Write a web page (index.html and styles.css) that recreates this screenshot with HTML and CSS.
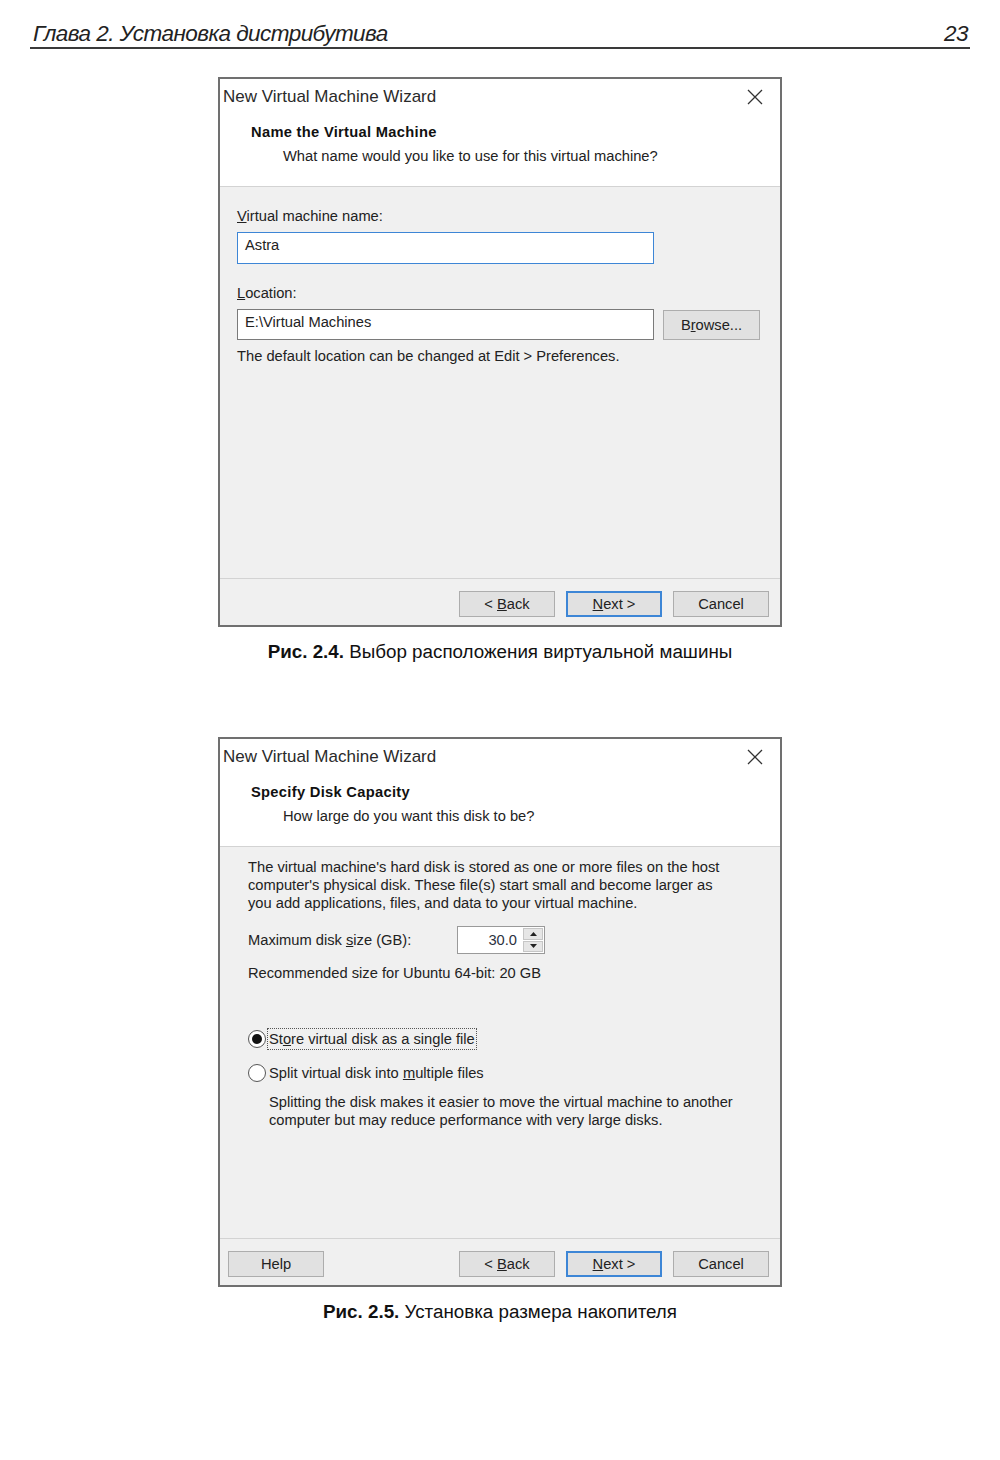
FILE: index.html
```html
<!DOCTYPE html>
<html lang="ru">
<head>
<meta charset="utf-8">
<title>Глава 2. Установка дистрибутива</title>
<link rel="stylesheet" href="styles.css">
</head>
<body>
<div class="page">
  <header class="running-head">
    <span class="chapter">Глава 2. Установка дистрибутива</span>
    <span class="page-no">23</span>
  </header>

  <figure class="figure fig-first">
    <div class="dialog">
      <div class="dlg-head">
        <div class="titlebar">
          <span class="title">New Virtual Machine Wizard</span>
          <svg class="close" width="16" height="16" viewBox="0 0 16 16"><path d="M1 1 L15 15 M15 1 L1 15" stroke="#333" stroke-width="1.3" fill="none"/></svg>
        </div>
        <div class="step-title">Name the Virtual Machine</div>
        <div class="step-sub">What name would you like to use for this virtual machine?</div>
      </div>
      <div class="dlg-body body-name">
        <div class="field-label"><u>V</u>irtual machine name:</div>
        <div class="textbox focused">Astra</div>
        <div class="field-label label-loc"><u>L</u>ocation:</div>
        <div class="loc-row">
          <div class="textbox loc">E:\Virtual Machines</div>
          <div class="btn browse"><span>B<u>r</u>owse...</span></div>
        </div>
        <div class="note">The default location can be changed at Edit &gt; Preferences.</div>
      </div>
      <div class="dlg-foot">
        <div class="spacer"></div>
        <div class="btn"><span>&lt; <u>B</u>ack</span></div>
        <div class="btn primary"><span><u>N</u>ext &gt;</span></div>
        <div class="btn"><span>Cancel</span></div>
      </div>
    </div>
    <figcaption class="caption"><b>Рис. 2.4.</b> Выбор расположения виртуальной машины</figcaption>
  </figure>

  <figure class="figure fig-second">
    <div class="dialog">
      <div class="dlg-head">
        <div class="titlebar">
          <span class="title">New Virtual Machine Wizard</span>
          <svg class="close" width="16" height="16" viewBox="0 0 16 16"><path d="M1 1 L15 15 M15 1 L1 15" stroke="#333" stroke-width="1.3" fill="none"/></svg>
        </div>
        <div class="step-title">Specify Disk Capacity</div>
        <div class="step-sub">How large do you want this disk to be?</div>
      </div>
      <div class="dlg-body body-disk">
        <p class="para">The virtual machine's hard disk is stored as one or more files on the host<br>computer's physical disk. These file(s) start small and become larger as<br>you add applications, files, and data to your virtual machine.</p>
        <div class="size-row">
          <span class="size-label">Maximum disk <u>s</u>ize (GB):</span>
          <div class="spinner">
            <span class="spin-value">30.0</span>
            <span class="spin-arrows">
              <span class="arrow up"><svg width="7" height="4" viewBox="0 0 7 4"><path d="M0 4 L3.5 0 L7 4 Z" fill="#222"/></svg></span>
              <span class="arrow down"><svg width="7" height="4" viewBox="0 0 7 4"><path d="M0 0 L3.5 4 L7 0 Z" fill="#222"/></svg></span>
            </span>
          </div>
        </div>
        <div class="recommend">Recommended size for Ubuntu 64-bit: 20 GB</div>
        <div class="radio-row first-radio">
          <span class="radio checked"></span>
          <span class="radio-label focus">St<u>o</u>re virtual disk as a single file</span>
        </div>
        <div class="radio-row">
          <span class="radio"></span>
          <span class="radio-label">Split virtual disk into <u>m</u>ultiple files</span>
        </div>
        <p class="para split-note">Splitting the disk makes it easier to move the virtual machine to another<br>computer but may reduce performance with very large disks.</p>
      </div>
      <div class="dlg-foot">
        <div class="btn help"><span>Help</span></div>
        <div class="spacer"></div>
        <div class="btn"><span>&lt; <u>B</u>ack</span></div>
        <div class="btn primary"><span><u>N</u>ext &gt;</span></div>
        <div class="btn"><span>Cancel</span></div>
      </div>
    </div>
    <figcaption class="caption"><b>Рис. 2.5.</b> Установка размера накопителя</figcaption>
  </figure>
</div>
</body>
</html>
```

FILE: styles.css
```css
* { box-sizing: border-box; }

html, body {
  margin: 0;
  padding: 0;
  background: #ffffff;
}

.page {
  width: 1000px;
  height: 1460px;
  display: flex;
  flex-direction: column;
  color: #1e1e1e;
}

.running-head {
  margin: 22px 30px 0 30px;
  height: 27px;
  display: flex;
  justify-content: space-between;
  align-items: flex-start;
  border-bottom: 2px solid #3a3a3a;
  font-family: "Liberation Sans Narrow", "Liberation Sans", sans-serif;
  font-style: italic;
  font-size: 22.5px;
  letter-spacing: -0.55px;
  line-height: 24px;
  color: #222;
}
.chapter { padding-left: 3px; }
.page-no { padding-right: 2px; }

.figure {
  margin: 0;
  display: flex;
  flex-direction: column;
  align-items: center;
}
.fig-first { margin-top: 28px; }
.fig-second { margin-top: 75px; }

.dialog {
  width: 564px;
  height: 550px;
  border: 2px solid #707070;
  background: #f0f0f0;
  display: flex;
  flex-direction: column;
  font-family: "Liberation Sans", "Noto Sans", sans-serif;
  font-size: 14.7px;
  color: #222;
}

.dlg-head {
  background: #ffffff;
  height: 108px;
  border-bottom: 1px solid #d3d3d3;
}

.titlebar {
  height: 35px;
  display: flex;
  align-items: center;
  justify-content: space-between;
  padding: 1px 17px 0 3px;
}
.title {
  font-size: 17px;
  color: #2a2a2a;
}
.close { display: block; }

.step-title {
  margin: 8px 0 0 31px;
  line-height: 20px;
  font-weight: bold;
  letter-spacing: 0.3px;
  color: #111;
}
.step-sub {
  margin: 4px 0 0 63px;
  line-height: 20px;
}

.dlg-body {
  flex: 1;
  display: flex;
  flex-direction: column;
  align-items: flex-start;
}

.body-name { padding: 19px 20px 0 17px; }

.field-label { line-height: 20px; }
.label-loc { margin-top: 19px; }

.textbox {
  margin-top: 6px;
  width: 417px;
  height: 32px;
  background: #fff;
  border: 1px solid #7a7a7a;
  padding: 2px 7px;
  line-height: 20px;
}
.textbox.focused { border-color: #3d86d6; }

.loc-row {
  margin-top: 6px;
  display: flex;
  gap: 9px;
  align-items: flex-start;
}
.textbox.loc {
  margin-top: 0;
  height: 31px;
}
.btn {
  width: 96px;
  height: 26px;
  background: #e1e1e1;
  border: 1px solid #adadad;
  display: flex;
  align-items: center;
  justify-content: center;
  line-height: 20px;
  color: #222;
  white-space: pre;
}
.btn.browse {
  margin-top: 1px;
  width: 97px;
  height: 30px;
}
.btn.primary {
  border: 2px solid #3d86d6;
}

.note {
  margin-top: 6px;
  line-height: 20px;
}

.dlg-foot {
  height: 47px;
  border-top: 1px solid #d3d3d3;
  display: flex;
  align-items: flex-start;
  gap: 11px;
  padding: 12px 11px 0 8px;
}
.spacer { flex: 1; }

.body-disk { padding: 11px 20px 0 28px; }

.para {
  margin: 0;
  line-height: 18px;
}

.size-row {
  margin-top: 14px;
  display: flex;
  align-items: center;
}
.size-label {
  width: 209px;
  line-height: 20px;
}
.spinner {
  width: 88px;
  height: 28px;
  border: 1px solid #9a9a9a;
  background: #fff;
  display: flex;
}
.spin-value {
  flex: 1;
  text-align: right;
  padding-right: 5px;
  line-height: 26px;
  color: #2c3140;
}
.spin-arrows {
  width: 22px;
  display: flex;
  flex-direction: column;
  gap: 1px;
  padding: 1px;
  background: #fff;
}
.arrow {
  flex: 1;
  background: #e6e6e6;
  border: 1px solid #c6c6c6;
  display: flex;
  align-items: center;
  justify-content: center;
}
.arrow svg { display: block; }

.recommend {
  margin-top: 9px;
  line-height: 20px;
}

.radio-row {
  margin-top: 14px;
  display: flex;
  align-items: center;
  gap: 2px;
  line-height: 20px;
}
.radio-row.first-radio { margin-top: 46px; }

.radio {
  width: 18px;
  height: 18px;
  border-radius: 50%;
  border: 1px solid #555;
  background: #fff;
  position: relative;
  flex: none;
}
.radio.checked::after {
  content: "";
  position: absolute;
  left: 3px;
  top: 3px;
  width: 10px;
  height: 10px;
  border-radius: 50%;
  background: #111;
}
.radio-label { padding: 0 1px; }
.radio-label.focus { outline: 1px dotted #555; }

.split-note {
  margin-top: 10px;
  padding-left: 21px;
}

.btn.help { width: 96px; margin-left: 0; }

.caption {
  margin-top: 15px;
  font-family: "Liberation Sans", Arial, sans-serif;
  font-size: 18.8px;
  line-height: 20px;
  color: #111;
}
.caption b { font-weight: bold; }
```
